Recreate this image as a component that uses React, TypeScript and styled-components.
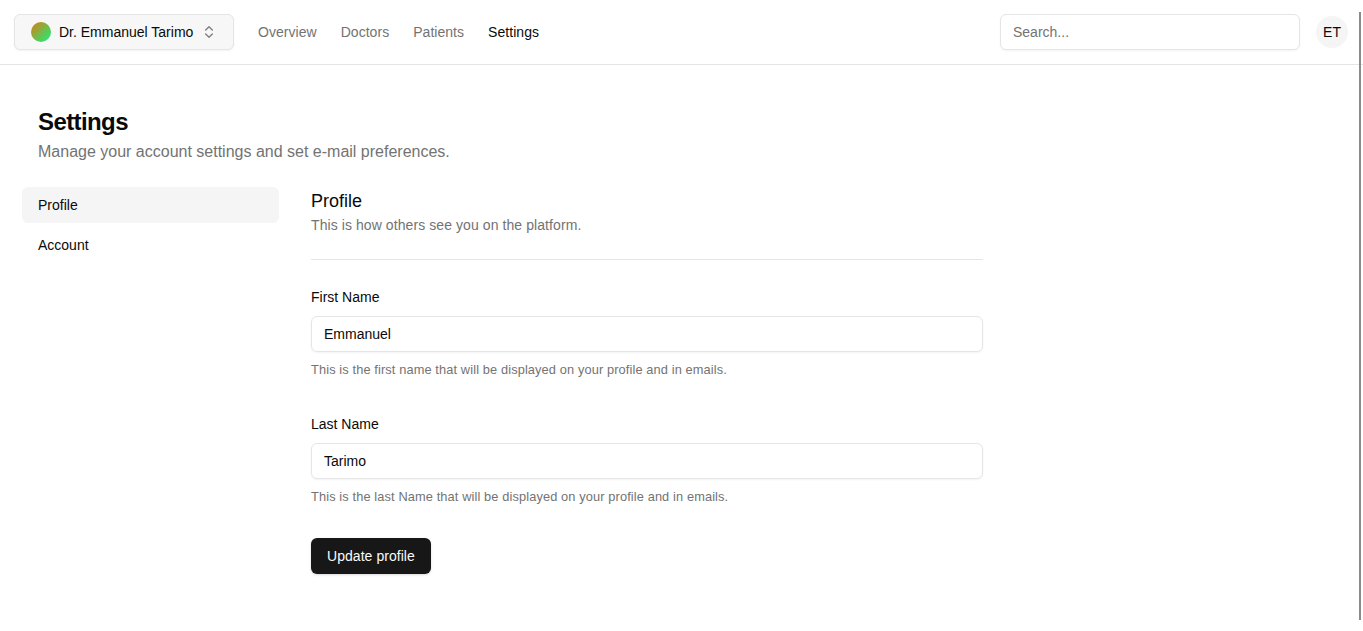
import React from "react";
import styled, { createGlobalStyle, css } from "styled-components";
import { ChevronsUpDown } from "lucide-react";

const GlobalStyle = createGlobalStyle`
  *, *::before, *::after { box-sizing: border-box; }
  html, body { margin: 0; height: 100%; overflow: hidden; }
  body {
    background: #fff;
    color: #0a0a0a;
    font-family: "Liberation Sans", Arial, sans-serif;
    font-size: 16px;
    line-height: 24px;
  }
  h2, h3, p { margin: 0; }
  button, input { font: inherit; color: inherit; }
`;

const Page = styled.div`
  position: relative;
  height: 631px;
`;

const Header = styled.header`
  display: flex;
  align-items: center;
  height: 65px;
  padding: 0 15px 0 14px;
  border-bottom: 1px solid #e5e5e5;
`;

const AccountSwitcher = styled.button`
  display: flex;
  align-items: center;
  width: 220px;
  height: 36px;
  padding: 0 16px;
  border: 1px solid #e5e5e5;
  border-radius: 6px;
  background: #f7f7f7;
  box-shadow: 0 1px 2px rgba(0, 0, 0, 0.05);
  font-size: 14px;
  line-height: 20px;
  white-space: nowrap;

  svg {
    flex: none;
    margin-left: auto;
    opacity: 0.5;
  }
`;

const GradientDot = styled.span`
  flex: none;
  width: 20px;
  height: 20px;
  margin-right: 8px;
  border-radius: 50%;
  background: linear-gradient(135deg, #e17a10 0%, #10f580 100%);
`;

const MainNav = styled.nav`
  display: flex;
  gap: 24px;
  margin: 0 auto 0 24px;
`;

const NavLink = styled.a<{ $active?: boolean }>`
  color: ${(p) => (p.$active ? "#0a0a0a" : "#737373")};
  font-size: 14px;
  line-height: 20px;
  letter-spacing: 0.04px;
`;

const inputStyle = css`
  display: block;
  height: 36px;
  padding: 4px 12px;
  border: 1px solid #e5e5e5;
  border-radius: 6px;
  background: transparent;
  box-shadow: 0 1px 2px rgba(0, 0, 0, 0.05);
  font-size: 14px;
  line-height: 20px;
  outline: none;

  &::placeholder { color: #737373; opacity: 1; }
`;

const SearchInput = styled.input`
  ${inputStyle}
  width: 300px;
`;

const Avatar = styled.div`
  display: flex;
  align-items: center;
  justify-content: center;
  width: 32px;
  height: 32px;
  margin-left: 16px;
  border-radius: 50%;
  background: #f5f5f5;
  font-size: 14px;
`;

const Content = styled.main`
  padding: 41px 22px 0;
`;

const PageHeading = styled.div`
  padding-left: 16px;
`;

const Title = styled.h2`
  font-size: 24px;
  line-height: 32px;
  font-weight: 700;
  letter-spacing: -0.6px;
`;

const Subtitle = styled.p`
  margin-top: 2px;
  color: #737373;
`;

const Columns = styled.div`
  display: flex;
  gap: 32px;
  margin-top: 23px;
`;

const SideNav = styled.nav`
  display: flex;
  flex-direction: column;
  gap: 4px;
  width: 257px;
`;

const SideLink = styled.a<{ $active?: boolean }>`
  display: flex;
  align-items: center;
  height: 36px;
  padding: 0 16px;
  border-radius: 6px;
  background: ${(p) => (p.$active ? "#f5f5f5" : "transparent")};
  font-size: 14px;
  line-height: 20px;
`;

const Panel = styled.section`
  width: 672px;
`;

const PanelTitle = styled.h3`
  font-size: 18px;
  line-height: 28px;
  font-weight: 400;
`;

const PanelText = styled.p`
  color: #737373;
  font-size: 14px;
  line-height: 20px;
  letter-spacing: 0.08px;
`;

const Separator = styled.div`
  height: 1px;
  margin: 24px 0;
  background: #e5e5e5;
`;

const Form = styled.form`
  display: flex;
  flex-direction: column;
  align-items: stretch;
  gap: 32px;
`;

const Label = styled.label`
  display: block;
  padding: 4px 0;
  margin-bottom: 6px;
  font-size: 14px;
  line-height: 18px;
`;

const TextInput = styled.input`
  ${inputStyle}
  width: 100%;
`;

const Hint = styled.p`
  margin-top: 8px;
  color: #737373;
  font-size: 12.8px;
  line-height: 19px;
  letter-spacing: 0.12px;
`;

const SubmitButton = styled.button`
  align-self: flex-start;
  height: 36px;
  padding: 0 16px;
  border: 0;
  border-radius: 6px;
  background: #171717;
  color: #fafafa;
  box-shadow: 0 1px 3px rgba(0, 0, 0, 0.1), 0 1px 2px rgba(0, 0, 0, 0.06);
  font-size: 14px;
  line-height: 20px;
  letter-spacing: 0.05px;
`;

const ScrollThumb = styled.div`
  position: absolute;
  top: 12px;
  right: 2px;
  width: 2px;
  height: 608px;
  background: #8b8b8b;
`;

const navItems = ["Overview", "Doctors", "Patients", "Settings"];

const fields = [
  {
    id: "first-name",
    label: "First Name",
    value: "Emmanuel",
    hint: "This is the first name that will be displayed on your profile and in emails.",
  },
  {
    id: "last-name",
    label: "Last Name",
    value: "Tarimo",
    hint: "This is the last Name that will be displayed on your profile and in emails.",
  },
];

export default function App() {
  return (
    <Page>
      <GlobalStyle />
      <Header>
        <AccountSwitcher type="button">
          <GradientDot />
          Dr. Emmanuel Tarimo
          <ChevronsUpDown size={16} />
        </AccountSwitcher>
        <MainNav>
          {navItems.map((item) => (
            <NavLink key={item} $active={item === "Settings"}>
              {item}
            </NavLink>
          ))}
        </MainNav>
        <SearchInput type="search" placeholder="Search..." />
        <Avatar>ET</Avatar>
      </Header>
      <Content>
        <PageHeading>
          <Title>Settings</Title>
          <Subtitle>Manage your account settings and set e-mail preferences.</Subtitle>
        </PageHeading>
        <Columns>
          <SideNav>
            <SideLink $active>Profile</SideLink>
            <SideLink>Account</SideLink>
          </SideNav>
          <Panel>
            <PanelTitle>Profile</PanelTitle>
            <PanelText>This is how others see you on the platform.</PanelText>
            <Separator />
            <Form>
              {fields.map((f) => (
                <div key={f.id}>
                  <Label htmlFor={f.id}>{f.label}</Label>
                  <TextInput id={f.id} defaultValue={f.value} />
                  <Hint>{f.hint}</Hint>
                </div>
              ))}
              <SubmitButton type="button">Update profile</SubmitButton>
            </Form>
          </Panel>
        </Columns>
      </Content>
      <ScrollThumb />
    </Page>
  );
}
